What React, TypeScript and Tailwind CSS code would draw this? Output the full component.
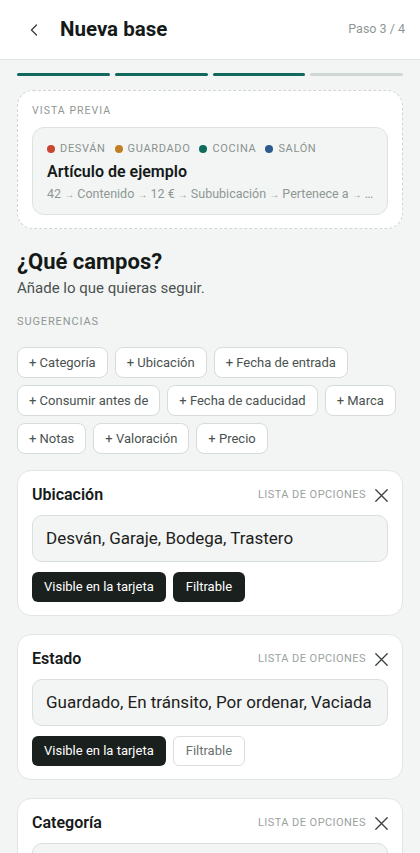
import { ChevronLeft } from "lucide-react";

const suggestions = [
  ["+ Categoría", "+ Ubicación", "+ Fecha de entrada"],
  ["+ Consumir antes de", "+ Fecha de caducidad", "+ Marca"],
  ["+ Notas", "+ Valoración", "+ Precio"],
];

const tags = [
  { label: "DESVÁN", color: "bg-[#c8472f]" },
  { label: "GUARDADO", color: "bg-[#c07f22]" },
  { label: "COCINA", color: "bg-[#0f6b5a]" },
  { label: "SALÓN", color: "bg-[#2d5a8c]" },
];

function CloseIcon() {
  return (
    <svg width="13" height="13" viewBox="0 0 13 13" className="text-[#3a403e]">
      <path d="M0.8 0.8L12.2 12.2M12.2 0.8L0.8 12.2" stroke="currentColor" strokeWidth="1.3" strokeLinecap="round" />
    </svg>
  );
}

function FieldCard({
  title,
  value,
  filtrable,
}: {
  title: string;
  value: string;
  filtrable: boolean;
}) {
  return (
    <div className="rounded-[14px] border border-[#e1e6e4] bg-white px-[14px] pt-[13px] pb-[13px]">
      <div className="flex h-[22px] items-center justify-between">
        <span className="text-[16px] font-semibold text-[#151a19]">{title}</span>
        <div className="flex items-center gap-[9px]">
          <span className="text-[11px] tracking-[0.04em] text-[#9aa3a0]">LISTA DE OPCIONES</span>
          <CloseIcon />
        </div>
      </div>
      <div className="mt-[9px] flex h-[47px] items-center rounded-[10px] border border-[#d9dfdc] bg-[#f3f5f4] px-[13px] text-[17px] whitespace-nowrap text-[#1c2120]">
        {value}
      </div>
      <div className="mt-[10px] flex gap-[7px]">
        <span className="flex h-[30px] items-center rounded-[6px] bg-[#1a201e] px-[12px] text-[13px] whitespace-nowrap text-white">
          Visible en la tarjeta
        </span>
        {filtrable ? (
          <span className="flex h-[30px] items-center rounded-[6px] bg-[#1a201e] px-[13px] text-[13px] text-white">
            Filtrable
          </span>
        ) : (
          <span className="flex h-[30px] items-center rounded-[6px] border border-[#d9dfdc] bg-white px-[12px] text-[13px] text-[#6b7370]">
            Filtrable
          </span>
        )}
      </div>
    </div>
  );
}

export default function App() {
  return (
    <div className="h-[853px] overflow-hidden bg-[#f3f5f4] font-['Roboto',sans-serif]">
      <header className="flex h-[60px] items-center border-b border-[#e3e7e5] bg-white pr-[15px] pl-[24px]">
        <ChevronLeft className="h-[20px] w-[20px] text-[#3a403e]" strokeWidth={1.6} />
        <h1 className="ml-[16px] text-[20.5px] font-bold text-[#151a19]">Nueva base</h1>
        <span className="ml-auto text-[12.5px] text-[#8f9794]">Paso 3 / 4</span>
      </header>

      <main className="px-[17px] pt-[13px]">
        <div className="flex gap-[5px]">
          <div className="h-[3px] flex-1 rounded-full bg-[#10695a]" />
          <div className="h-[3px] flex-1 rounded-full bg-[#10695a]" />
          <div className="h-[3px] flex-1 rounded-full bg-[#10695a]" />
          <div className="h-[3px] flex-1 rounded-full bg-[#cfd8d5]" />
        </div>

        <div className="mt-[14px] rounded-[16px] border border-dashed border-[#cfd6d3] bg-white px-[14px] pt-[12px] pb-[13px]">
          <div className="text-[10.5px] leading-[16px] tracking-[0.1em] text-[#8f9794]">VISTA PREVIA</div>
          <div className="mt-[8px] rounded-[12px] border border-[#dde2e0] bg-[#f3f5f4] px-[14px] pt-[13px] pb-[10px]">
            <div className="flex items-center gap-[9px] text-[11px] leading-[16px] tracking-[0.06em] text-[#8a928f]">
              {tags.map((t) => (
                <span key={t.label} className="flex items-center gap-[5px]">
                  <span className={`h-[8px] w-[8px] rounded-full ${t.color}`} />
                  {t.label}
                </span>
              ))}
            </div>
            <div className="mt-[4px] text-[16px] leading-[22px] font-semibold text-[#151a19]">Artículo de ejemplo</div>
            <div className="mt-[2px] text-[12.5px] leading-[18px] whitespace-nowrap text-[#8f9794]">
              42 <span className="text-[10px]">→</span> Contenido <span className="text-[10px]">→</span> 12 €{" "}
              <span className="text-[10px]">→</span> Sububicación <span className="text-[10px]">→</span> Pertenece a{" "}
              <span className="text-[10px]">→</span> …
            </div>
          </div>
        </div>

        <h2 className="mt-[19px] text-[22px] leading-[28px] font-bold text-[#151a19]">¿Qué campos?</h2>
        <p className="mt-[2px] text-[15px] leading-[20px] text-[#4a5250]">Añade lo que quieras seguir.</p>
        <div className="mt-[16px] text-[11px] leading-[16px] tracking-[0.08em] text-[#8f9794]">SUGERENCIAS</div>

        <div className="mt-[17px] flex flex-col gap-[7px]">
          {suggestions.map((row, i) => (
            <div key={i} className="flex gap-[7px]">
              {row.map((s) => (
                <span
                  key={s}
                  className="flex h-[31px] items-center rounded-[8px] border border-[#d6dcda] bg-white px-[11px] text-[13px] whitespace-nowrap text-[#4a5250]"
                >
                  {s}
                </span>
              ))}
            </div>
          ))}
        </div>

        <div className="mt-[16px] flex flex-col gap-[18px]">
          <FieldCard title="Ubicación" value="Desván, Garaje, Bodega, Trastero" filtrable />
          <FieldCard title="Estado" value="Guardado, En tránsito, Por ordenar, Vaciada" filtrable={false} />
          <FieldCard title="Categoría" value="Comida, Bebida, Limpieza" filtrable={false} />
        </div>
      </main>
    </div>
  );
}
